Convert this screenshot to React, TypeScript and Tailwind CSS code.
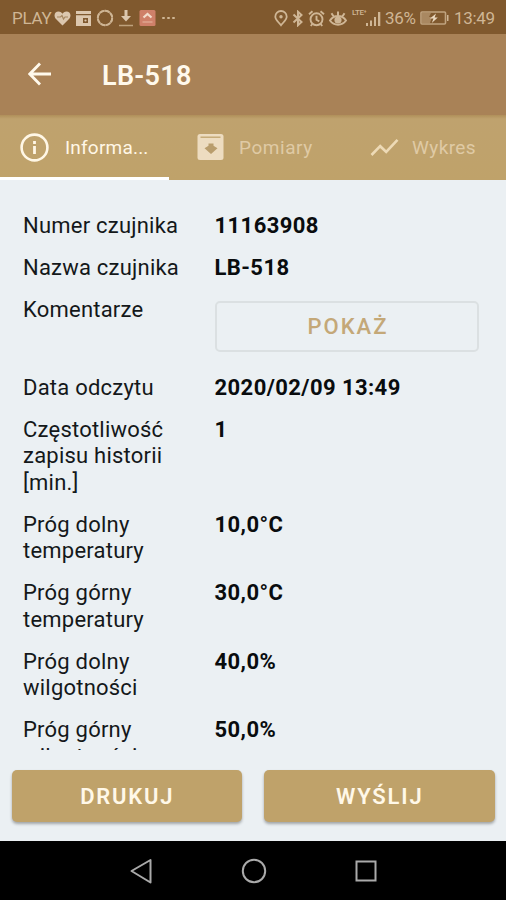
import React from "react";

const rows: { label: string[]; value?: string; action?: string }[] = [
  { label: ["Numer czujnika"], value: "11163908" },
  { label: ["Nazwa czujnika"], value: "LB-518" },
  { label: ["Komentarze"], action: "POKAŻ" },
  { label: ["Data odczytu"], value: "2020/02/09 13:49" },
  { label: ["Częstotliwość", "zapisu historii", "[min.]"], value: "1" },
  { label: ["Próg dolny", "temperatury"], value: "10,0°C" },
  { label: ["Próg górny", "temperatury"], value: "30,0°C" },
  { label: ["Próg dolny", "wilgotności"], value: "40,0%" },
  { label: ["Próg górny", "wilgotności"], value: "50,0%" },
];

function StatusBar() {
  return (
    <div className="flex h-[34px] shrink-0 items-center bg-[#80592e] pl-3 pr-[11px] pt-[2px] text-[#cfb695]">
      <span className="w-[42px] text-[17px] leading-none tracking-[-0.300px]">PLAY</span>
      <svg className="h-[17px] w-[17px] shrink-0" viewBox="0 0 17 17">
        <path d="M8.5 15.5 2 9C-1 5.400 1 1.500 4.500 1.500 6.500 1.500 7.800 2.500 8.500 3.800 9.200 2.500 10.500 1.500 12.500 1.500 16 1.500 18 5.400 15 9Z" fill="#dcc7ae" />
        <path d="M3 7h3.500l1.500-1.500 1.500 3.500L11 7h3" fill="none" stroke="#a5865f" strokeWidth="1.200" />
      </svg>
      <svg className="ml-[4px] h-[17px] w-[17px] shrink-0" viewBox="0 0 17 17">
        <path d="M1 1h15v3H1zM1 5.300h15V16H1z" fill="#dcc7ae" />
        <path d="M8 8h5v5H8z" fill="#80592e" />
        <circle cx="10.500" cy="10.500" r="1.100" fill="#dcc7ae" />
      </svg>
      <svg className="ml-[4px] h-[18px] w-[18px] shrink-0" viewBox="0 0 18 18">
        <circle cx="9" cy="9" r="7.200" fill="none" stroke="currentColor" strokeOpacity=".75" strokeWidth="1.900" />
        <circle cx="9" cy="9" r="7.200" fill="none" stroke="currentColor" strokeWidth="1.900" strokeDasharray="4.500 1.150" />
      </svg>
      <svg className="ml-[4px] h-[17px] w-[16px] shrink-0" viewBox="0 0 16 17">
        <path d="M6.500 0h3v6H13l-5 5.500L3 6h3.500z" fill="#dcc7ae" />
        <path d="M1 15.500h14" stroke="#bea17c" strokeWidth="1.500" />
      </svg>
      <svg className="ml-[5px] h-[16px] w-[17px] shrink-0" viewBox="0 0 17 16">
        <rect x=".500" y="0" width="16" height="16" rx="1.500" fill="#cf8069" />
        <path d="m4.500 7.500 4-3.500 4 3.500" fill="none" stroke="#f3ddcd" strokeWidth="2.200" />
        <path d="M3.500 12h10" stroke="#dfa68f" strokeWidth="1.500" />
      </svg>
      <span className="ml-[6px] flex gap-[2.500px]">
        <i className="h-[2.500px] w-[2.500px] rounded-full bg-[#cfb695]" />
        <i className="h-[2.500px] w-[2.500px] rounded-full bg-[#cfb695]" />
        <i className="h-[2.500px] w-[2.500px] rounded-full bg-[#cfb695]" />
      </span>
      <div className="ml-auto flex items-center">
        <svg className="h-[17px] w-[14px]" viewBox="0 0 14 17" fill="none" stroke="currentColor" strokeWidth="1.800">
          <path d="M7 15.300C4 11.500 1.300 9.600 1.300 6.700a5.700 5.700 0 0 1 11.400 0C12.700 9.600 10 11.500 7 15.300Z" />
          <circle cx="7" cy="6.800" r="1.700" fill="currentColor" stroke="none" />
        </svg>
        <svg className="ml-[4px] h-[17px] w-[12px]" viewBox="0 0 12 17" fill="none" stroke="currentColor" strokeWidth="2">
          <path d="m1.500 4.500 8 7.500L6 15.200V1.800l3.500 3.200-8 7.500" />
        </svg>
        <svg className="ml-[4px] h-[17px] w-[17px]" viewBox="0 0 17 17" fill="none" stroke="currentColor" strokeWidth="1.900">
          <circle cx="8.500" cy="9.300" r="6" />
          <path d="M1 4.200 4.500 1.300M16 4.200l-3.500-2.900M8.500 5.800v4l2.800 1.500M4.300 14l-1.500 2M12.700 14l1.500 2" />
        </svg>
        <svg className="ml-[4px] h-[17px] w-[18px]" viewBox="0 0 18 17" fill="none" stroke="currentColor" strokeWidth="2">
          <path d="M1 10.500c4-6 12-6 16 0-4 5.500-12 5.500-16 0ZM9 6V1.500M4.600 6.500 2.500 3.200M13.400 6.500l2.100-3.300" />
          <circle cx="9" cy="10" r="2.600" fill="currentColor" />
        </svg>
        <div className="relative ml-[5px] h-[18px] w-[29px]">
          <span className="absolute left-0 top-0 text-[8px] font-medium leading-[8px] tracking-[-0.300px]">LTE<sup className="text-[5px]">+</sup></span>
          <svg className="absolute bottom-[1px] right-0 h-[14px] w-[15px]" viewBox="0 0 15 14" fill="currentColor">
            <path d="M0 11h2v3H0zM4 8.500h2V14H4zM8 5h2v9H8zM12 0h2.300v14H12z" />
          </svg>
        </div>
        <span className="ml-[4px] w-[32px] whitespace-nowrap text-[17px] leading-none tracking-[-0.300px]">36%</span>
        <svg className="ml-[3px] h-[14px] w-[29px]" viewBox="0 0 29 14">
          <rect x="1" y="1" width="24.500" height="12" rx="1" fill="none" stroke="currentColor" strokeOpacity=".8" strokeWidth="1.600" />
          <path d="M2 2h9l-2 4h3l-2 6H2z" fill="#a98861" />
          <path d="m16 2.500-6 5h3.500l-1.700 4.500 6-5.500h-3.200z" fill="#ead8bf" />
          <path d="M27 4h1.500v6H27z" fill="currentColor" />
        </svg>
        <span className="ml-[5px] w-[41px] whitespace-nowrap text-[17px] leading-none tracking-[-0.300px]">13:49</span>
      </div>
    </div>
  );
}

function Tabs() {
  return (
    <nav className="grid h-[65px] shrink-0 grid-cols-[169px_169px_168px] bg-[#bfa26c] bg-linear-to-b from-[#b08f5a] from-0% via-[#bfa26e] via-6% to-[#bfa26a] text-[19px] text-[#dfcaa5]">
      <div className="flex items-center border-b-[3px] border-white pl-[20px] pt-[2px] text-[#fff7e6]">
        <svg className="h-[29px] w-[29px]" viewBox="0 0 29 29">
          <circle cx="14.500" cy="14.500" r="12.900" fill="none" stroke="currentColor" strokeWidth="2.600" />
          <path d="M13.100 13h2.800v8h-2.800zM13.100 8h2.800v3h-2.800z" fill="currentColor" />
        </svg>
        <span className="ml-[16px] pt-[3px] tracking-[0.200px]">Informa...</span>
      </div>
      <div className="flex items-center pl-[28px]">
        <svg className="mb-[2px] h-[26px] w-[27px]" viewBox="0 0 27 26">
          <rect x=".500" width="26" height="26" rx="2.500" fill="#eddcc0" />
          <path d="M3.500 3.200h20" stroke="#bfa26c" strokeWidth="1.300" />
          <path d="M11.500 9.500h5v2.300l4 2.400-6.500 5.800-6.500-5.800 4-2.400z" fill="#b99d6c" />
        </svg>
        <span className="ml-[15px] pt-[2px] tracking-[0.550px]">Pomiary</span>
      </div>
      <div className="flex items-center pl-[32px]">
        <svg className="h-[19px] w-[29px]" viewBox="0 0 29 19">
          <path d="m1.500 17 8.700-8.800 6 5.800L27.500 1.800" fill="none" stroke="#eddab6" strokeWidth="2.600" />
        </svg>
        <span className="ml-[13px] pt-[2px] tracking-[0.400px]">Wykres</span>
      </div>
    </nav>
  );
}

export default function App() {
  return (
    <div className="flex h-[900px] w-[506px] flex-col overflow-hidden bg-[#ebf0f3] font-['Roboto',sans-serif]">
      <StatusBar />
      <header className="flex h-[81px] shrink-0 items-center bg-[#a98257] pl-[28px] text-[#fff9ec]">
        <svg className="mb-[2px] h-[24px] w-[24px]" viewBox="0 0 24 24" fill="none" stroke="currentColor" strokeWidth="2.800">
          <path d="M23 12H2M12 1.500 1.800 12 12 22.500" />
        </svg>
        <h1 className="ml-[50px] pt-[3px] text-[27px] font-semibold leading-none tracking-[0.300px]">LB-518</h1>
      </header>
      <Tabs />
      <main className="flex h-[570px] shrink-0 flex-col gap-[15.500px] overflow-hidden pl-[23px] pt-[32.500px] text-[22px] leading-[26.500px] text-[#14181a]">
        {rows.map((r, i) => (
          <div key={i} className="flex shrink-0">
            <div className="w-[191px] shrink-0 tracking-[0.220px]">
              {r.label.map((l) => (
                <div key={l}>{l}</div>
              ))}
            </div>
            {r.value && <div className="pl-[0.500px] font-bold tracking-[0.420px] text-[#090c0e]">{r.value}</div>}
            {r.action && (
              <button className="mb-[7.500px] ml-[0.500px] mt-[4px] h-[51px] w-[264px] rounded-[5px] border-2 border-[#dbe0e2] pl-[3px] pt-[2px] text-[22px] font-medium tracking-[2px] text-[#c4a878]">
                {r.action}
              </button>
            )}
          </div>
        ))}
      </main>
      <div className="flex h-[91px] shrink-0 gap-[22px] px-[11.500px] pt-[20px]">
        {["DRUKUJ", "WYŚLIJ"].map((t) => (
          <button key={t} className="h-[52px] w-[231px] rounded-[5px] bg-[#bfa26a] pl-[1px] text-[22px] font-semibold tracking-[1.800px] text-[#fff8e8] shadow-[0_2px_3px_#00000050]">
            {t}
          </button>
        ))}
      </div>
      <footer className="flex h-[59px] shrink-0 items-center bg-black pl-[130px]">
        <svg className="h-[26px] w-[22px]" viewBox="0 0 22 26" fill="none" stroke="#aaa" strokeWidth="2" strokeLinejoin="round">
          <path d="M20.500 2v22.500L1.500 13z" />
        </svg>
        <svg className="ml-[89px] h-[26px] w-[26px]" viewBox="0 0 26 26" fill="none" stroke="#aaa" strokeWidth="2">
          <circle cx="13" cy="13" r="11.200" />
        </svg>
        <svg className="ml-[88px] h-[22px] w-[22px]" viewBox="0 0 22 22" fill="none" stroke="#aaa" strokeWidth="2">
          <rect x="1.500" y="1.500" width="19" height="19" />
        </svg>
      </footer>
    </div>
  );
}
